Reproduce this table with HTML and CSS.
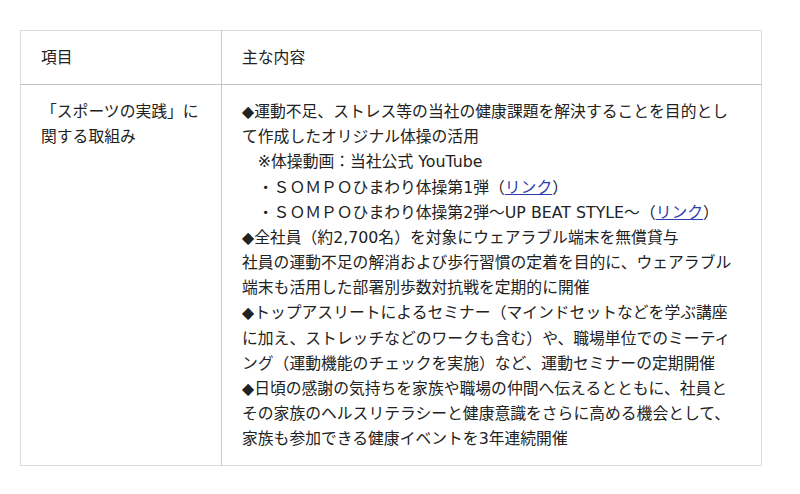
FILE: index.html
```html
<!DOCTYPE html>
<html lang="ja">
<head>
<meta charset="utf-8">
<link rel="stylesheet" href="styles.css">
</head>
<body>
<table class="tbl">
  <tr class="head">
    <th class="col1">項目</th>
    <th class="col2">主な内容</th>
  </tr>
  <tr>
    <td class="col1">「スポーツの実践」に<br>関する取組み</td>
    <td class="col2">◆運動不足、ストレス等の当社の健康課題を解決することを目的とし<br>て作成したオリジナル体操の活用<br>　※体操動画：当社公式 YouTube<br>　・ＳＯＭＰＯひまわり体操第1弾（<a href="#">リンク</a>）<br>　・ＳＯＭＰＯひまわり体操第2弾～UP BEAT STYLE～（<a href="#">リンク</a>）<br>◆全社員（約2,700名）を対象にウェアラブル端末を無償貸与<br>社員の運動不足の解消および歩行習慣の定着を目的に、ウェアラブル<br>端末も活用した部署別歩数対抗戦を定期的に開催<br>◆トップアスリートによるセミナー（マインドセットなどを学ぶ講座<br>に加え、ストレッチなどのワークも含む）や、職場単位でのミーティ<br>ング（運動機能のチェックを実施）など、運動セミナーの定期開催<br>◆日頃の感謝の気持ちを家族や職場の仲間へ伝えるとともに、社員と<br>その家族のヘルスリテラシーと健康意識をさらに高める機会として、<br>家族も参加できる健康イベントを3年連続開催</td>
  </tr>
</table>
</body>
</html>
```

FILE: styles.css
```css
html, body {
  margin: 0;
  padding: 0;
  background: #fff;
}
body {
  padding: 30px 0 0 20px;
  font-family: "DejaVu Sans", "Noto Sans CJK JP", sans-serif;
  font-size: 15.8px;
  line-height: 25.15px;
  color: #222;
}
.tbl {
  border-collapse: collapse;
  width: 742px;
  border: 1px solid #dcdcdc;
}
.tbl th, .tbl td {
  padding: 14px 20px 14px 20px;
  text-align: left;
  vertical-align: top;
  font-weight: normal;
  white-space: nowrap;
}
.col1 {
  width: 160px;
  border-right: 1px solid #c8c8c8;
}
.head th {
  border-bottom: 1px solid #c4c4c4;
}
a {
  color: #2b3cb0;
  text-decoration: underline;
}
```
